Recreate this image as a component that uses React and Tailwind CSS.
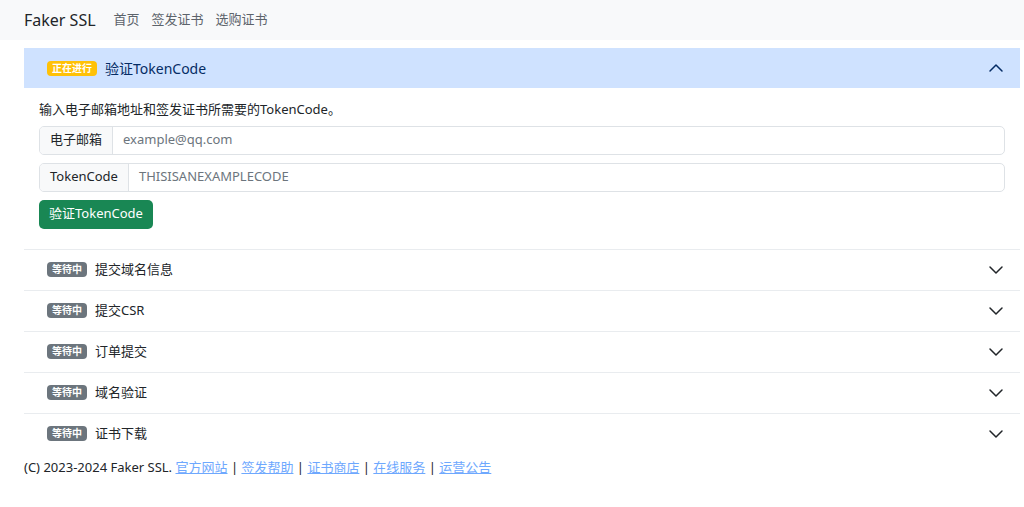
import React from "react";

const Chevron = ({ up }) => (
  <svg width="16" height="16" viewBox="0 0 16 16" fill="none" stroke={up ? "#052c65" : "#212529"} strokeWidth="1.5" strokeLinecap="round" strokeLinejoin="round">
    {up ? <path d="M2 11l6-6 6 6" /> : <path d="M2 5l6 6 6-6" />}
  </svg>
);

const items = ["提交域名信息", "提交CSR", "订单提交", "域名验证", "证书下载"];

export default function App() {
  return (
    <div className="min-h-[507px] bg-white text-[13px] text-[#212529]" style={{ fontFamily: '"Noto Sans", "Noto Sans CJK SC", sans-serif' }}>
      <nav className="h-[40px] bg-[#f8f9fa] flex items-center pl-[24px]">
        <span className="text-[16px] mr-[18px]">Faker SSL</span>
        <span className="text-[#5c636a] mr-[12px]">首页</span>
        <span className="text-[#5c636a] mr-[12px]">签发证书</span>
        <span className="text-[#5c636a]">选购证书</span>
      </nav>
      <div className="mx-[24px] mt-[8px] w-[996px]">
        <div className="h-[40px] bg-[#cfe2ff] flex items-center pl-[23px] pr-[16px] text-[#052c65]">
          <span className="bg-[#ffc107] text-white text-[10px] font-bold rounded-[4px] px-[5px] h-[15px] leading-[15px] mr-[8px]">正在进行</span>
          <span className="text-[14px]">验证TokenCode</span>
          <span className="ml-auto"><Chevron up /></span>
        </div>
        <div className="px-[15px] pt-[12px] pb-[20px]">
          <div className="mb-[6px]">输入电子邮箱地址和签发证书所需要的TokenCode。</div>
          <div className="flex h-[29px] border border-[#dee2e6] rounded-[5px] mb-[8px] overflow-hidden">
            <div className="bg-[#f8f9fa] border-r border-[#dee2e6] px-[10px] flex items-center">电子邮箱</div>
            <div className="flex items-center px-[10px] text-[#6c757d]">example@qq.com</div>
          </div>
          <div className="flex h-[29px] border border-[#dee2e6] rounded-[5px] mb-[8px] overflow-hidden">
            <div className="bg-[#f8f9fa] border-r border-[#dee2e6] px-[10px] flex items-center">TokenCode</div>
            <div className="flex items-center px-[10px] text-[#6c757d]">THISISANEXAMPLECODE</div>
          </div>
          <div className="inline-flex h-[29px] items-center px-[10px] bg-[#198754] text-white rounded-[5px] text-[13px]">验证TokenCode</div>
        </div>
        {items.map((t, i) => (
          <div key={t} className={`h-[41px] flex items-center pl-[23px] pr-[16px] border-t border-[#e9ecef] ${i === items.length - 1 ? "border-b-0" : ""}`}>
            <span className="bg-[#6c757d] text-white text-[10px] font-bold rounded-[4px] px-[5px] h-[15px] leading-[15px] mr-[8px]">等待中</span>
            <span>{t}</span>
            <span className="ml-auto"><Chevron /></span>
          </div>
        ))}
      </div>
      <div className="px-[24px] mt-[4px]">
        (C) 2023-2024 Faker SSL.{" "}
        <a className="text-[#6ea8fe] underline">官方网站</a> | <a className="text-[#6ea8fe] underline">签发帮助</a> |{" "}
        <a className="text-[#6ea8fe] underline">证书商店</a> | <a className="text-[#6ea8fe] underline">在线服务</a> |{" "}
        <a className="text-[#6ea8fe] underline">运营公告</a>
      </div>
    </div>
  );
}
